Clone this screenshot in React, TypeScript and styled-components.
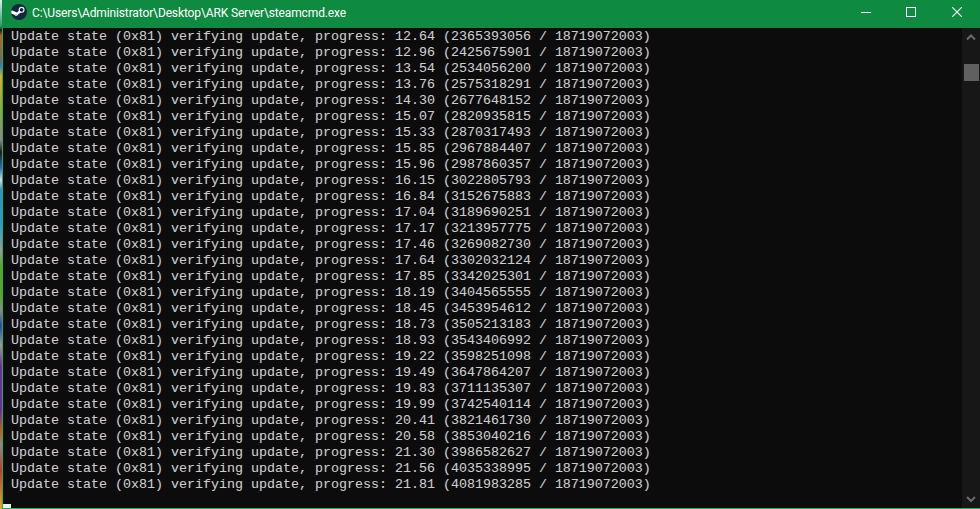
import styled, { createGlobalStyle } from "styled-components";

const rows: [string, string][] = [
  ["12.64", "2365393056"],
  ["12.96", "2425675901"],
  ["13.54", "2534056200"],
  ["13.76", "2575318291"],
  ["14.30", "2677648152"],
  ["15.07", "2820935815"],
  ["15.33", "2870317493"],
  ["15.85", "2967884407"],
  ["15.96", "2987860357"],
  ["16.15", "3022805793"],
  ["16.84", "3152675883"],
  ["17.04", "3189690251"],
  ["17.17", "3213957775"],
  ["17.46", "3269082730"],
  ["17.64", "3302032124"],
  ["17.85", "3342025301"],
  ["18.19", "3404565555"],
  ["18.45", "3453954612"],
  ["18.73", "3505213183"],
  ["18.93", "3543406992"],
  ["19.22", "3598251098"],
  ["19.49", "3647864207"],
  ["19.83", "3711135307"],
  ["19.99", "3742540114"],
  ["20.41", "3821461730"],
  ["20.58", "3853040216"],
  ["21.30", "3986582627"],
  ["21.56", "4035338995"],
  ["21.81", "4081983285"],
];

const GlobalStyle = createGlobalStyle`
  html, body {
    margin: 0;
    padding: 0;
    background: #0c0c0c;
    overflow: hidden;
  }
`;

// sliver of the desktop that shows left of the console window
const Desktop = styled.div`
  width: 980px;
  height: 509px;
  display: flex;
  background: linear-gradient(
    to bottom,
    #dfeaf2 0,
    #2f9a6a 26px,
    #1c1c1c 30px,
    #b5651d 36px,
    #6a6a6a 60px,
    #2a7fc0 66px,
    #d8b020 76px,
    #7fb23a 110px,
    #8a8a8a 140px,
    #1c1c1c 152px,
    #2a6fc0 168px,
    #d8dde0 180px,
    #2a90c8 190px,
    #20a0d0 224px,
    #9a9a9a 250px,
    #58a828 266px,
    #58a828 295px,
    #8a8a8a 310px,
    #1f4fa0 326px,
    #9a9a9a 345px,
    #6a2f9a 366px,
    #6a2f9a 410px,
    #b5651d 432px,
    #8a8a8a 445px,
    #c0392b 470px,
    #d8b020 509px
  );
`;

const Window = styled.div`
  flex: 1;
  min-width: 0;
  display: flex;
  flex-direction: column;
  margin-left: 2px;
  background: #0c0c0c;
  border-left: 1px solid #27ae60;
  border-bottom: 1px solid #27ae60;
`;

const TitleBar = styled.div`
  height: 28px;
  flex: none;
  box-sizing: border-box;
  padding-bottom: 4px;
  margin-left: -1px;
  display: flex;
  align-items: center;
  background: #0f8a41;
  color: #ffffff;
`;

const AppIcon = styled.svg`
  width: 16px;
  height: 16px;
  margin-left: 9px;
  flex: none;
`;

const Title = styled.div`
  flex: 1;
  margin-left: 5px;
  padding-top: 2px;
  font: 12px Roboto, "Liberation Sans", sans-serif;
  letter-spacing: -0.13px;
`;

const WindowButton = styled.div`
  width: 46px;
  height: 24px;
  display: flex;
  align-items: center;
  justify-content: center;
`;

const Glyph = styled.svg<{ $nudge?: number }>`
  width: 10px;
  height: 10px;
  display: block;
  margin-left: ${({ $nudge }) => $nudge ?? 0}px;
`;

const Body = styled.div`
  flex: 1;
  display: flex;
  min-height: 0;
`;

const Console = styled.div`
  flex: 1;
  position: relative;
  padding: 1px 0 0 8px;
`;

const Line = styled.div`
  height: 16px;
  font: 13.33px/16px "Liberation Mono", monospace;
  color: #cccccc;
  white-space: pre;
  text-shadow: -0.3px 0 rgba(96, 170, 255, 0.16), 0.3px 0 rgba(255, 170, 90, 0.16);
`;

const Cursor = styled.div`
  position: absolute;
  left: 0;
  bottom: 0;
  width: 8px;
  height: 4px;
  background: #f2f2f2;
`;

const ScrollBar = styled.div`
  width: 18px;
  flex: none;
  display: flex;
  flex-direction: column;
  background: #171717;
`;

const Arrow = styled.svg`
  width: 18px;
  height: 18px;
  flex: none;
`;

const Thumb = styled.div`
  width: 15px;
  height: 17px;
  margin: 18px 0 0 2px;
  background: #606060;
`;

const Track = styled.div`
  flex: 1;
`;

export default function App() {
  return (
    <>
      <GlobalStyle />
      <Desktop>
        <Window>
          <TitleBar>
            <AppIcon viewBox="0 0 16 16">
              <circle cx="8" cy="8" r="8" fill="#14263f" />
              <path d="M0.3 9.5 L5 11.5 A2.6 2.6 0 0 0 7.6 9.9 L10 8.6 L9 5.5 L6 8.6 L0.6 6.2 A8 8 0 0 0 0.3 9.5Z" fill="#ffffff" />
              <circle cx="10.6" cy="5.8" r="2.4" fill="#14263f" stroke="#ffffff" strokeWidth="1.1" />
              <circle cx="5" cy="10.8" r="1.2" fill="#c9d3dd" />
            </AppIcon>
            <Title>C:\Users\Administrator\Desktop\ARK Server\steamcmd.exe</Title>
            <WindowButton>
              <Glyph viewBox="0 0 10 10" $nudge={2}>
                <rect x="0" y="5" width="10" height="1" fill="#ffffff" />
              </Glyph>
            </WindowButton>
            <WindowButton>
              <Glyph viewBox="0 0 10 10">
                <rect x="0.5" y="0.5" width="9" height="9" fill="none" stroke="#ffffff" />
              </Glyph>
            </WindowButton>
            <WindowButton>
              <Glyph viewBox="0 0 10 10">
                <path d="M0.3 0.3 L9.7 9.7 M9.7 0.3 L0.3 9.7" stroke="#ffffff" strokeWidth="1.1" />
              </Glyph>
            </WindowButton>
          </TitleBar>
          <Body>
            <Console>
              {rows.map(([pct, done]) => (
                <Line key={done}>
                  {`Update state (0x81) verifying update, progress: ${pct} (${done} / 18719072003)`}
                </Line>
              ))}
              <Cursor />
            </Console>
            <ScrollBar>
              <Arrow viewBox="0 0 18 18">
                <path d="M5 11.5 L9 7.5 L13 11.5" fill="none" stroke="#6b6b6b" strokeWidth="2" />
              </Arrow>
              <Thumb />
              <Track />
              <Arrow viewBox="0 0 18 18">
                <path d="M5 7 L9 11 L13 7" fill="none" stroke="#6b6b6b" strokeWidth="2" />
              </Arrow>
            </ScrollBar>
          </Body>
        </Window>
      </Desktop>
    </>
  );
}
